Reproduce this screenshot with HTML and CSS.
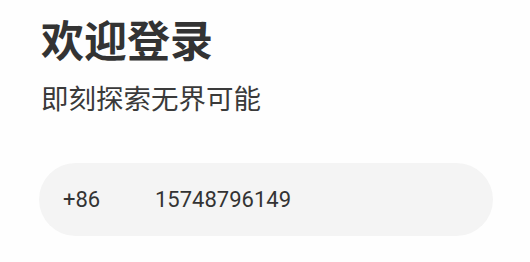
FILE: index.html
```html
<!DOCTYPE html>
<html lang="zh">
<head>
<meta charset="utf-8">
<link rel="stylesheet" href="styles.css">
</head>
<body>
<main class="page">
  <h1 class="title">欢迎登录</h1>
  <p class="subtitle">即刻探索无界可能</p>
  <div class="phone-field">
    <span class="code">+86</span>
    <span class="number">15748796149</span>
  </div>
</main>
</body>
</html>
```
FILE: styles.css
```css
html, body {
  margin: 0;
  padding: 0;
  background: #fefefe;
}
.page {
  display: flex;
  flex-direction: column;
  padding: 14px 37px 0 39px;
  font-family: "Noto Sans CJK SC", "Noto Sans", sans-serif;
  color: #333333;
}
.title {
  margin: 0 0 0 2px;
  font-size: 43px;
  line-height: 48px;
  font-weight: 700;
  color: #333333;
}
.subtitle {
  margin: 18px 0 0 2px;
  font-size: 27.5px;
  line-height: 34px;
  font-weight: 400;
  color: #3a3a3a;
}
.phone-field {
  margin-top: 49px;
  height: 73px;
  border-radius: 37px;
  background: #f4f4f4;
  display: flex;
  align-items: center;
  padding-left: 24px;
  font-family: Roboto, "Noto Sans", sans-serif;
  font-size: 22px;
  color: #333333;
}
.code {
  width: 92px;
}
```
